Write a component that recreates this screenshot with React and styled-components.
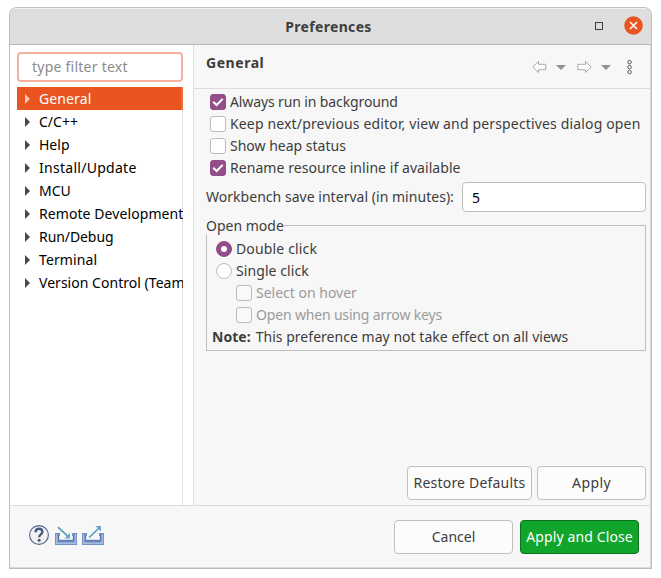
import React from "react";
import styled, { createGlobalStyle } from "styled-components";

const Global = createGlobalStyle`
  * { box-sizing: border-box; }
  body { margin: 0; background: #fff; }
`;

const Page = styled.div`
  width: 661px;
  height: 578px;
  padding: 7px 9px 9px 9px;
  background: #fff;
  font-family: "Noto Sans", "Open Sans", sans-serif;
  font-size: 14px;
  color: #3d3d3d;
  white-space: nowrap;
`;

const Window = styled.main`
  width: 643px;
  height: 562px;
  display: flex;
  flex-direction: column;
  overflow: hidden;
  border: 1px solid #bfbfbf;
  border-bottom-color: #bdbdbd;
  border-radius: 8px 8px 0 0;
  background: #f7f7f7;
  box-shadow: inset -1px -1px 0 #dadada;
`;

const TitleBar = styled.header`
  height: 37px;
  flex: none;
  display: grid;
  grid-template-columns: 1fr auto 1fr;
  align-items: center;
  padding: 0 8px 0 9px;
  background: #dedede;
  border-top: 1px solid #f2f2f2;
  border-bottom: 1px solid #b8b8b8;
`;

const WindowTitle = styled.h1`
  grid-column: 2;
  margin: 0 0 0 -5px;
  font-size: 14px;
  line-height: 20px;
  font-weight: 700;
  letter-spacing: 0.32px;
`;

const WindowControls = styled.div`
  display: flex;
  justify-content: flex-end;
  align-items: center;
  gap: 20px;
  margin-top: -2px;
`;

const Body = styled.div`
  display: flex;
  flex: 1;
  min-height: 0;
`;

const Sidebar = styled.nav`
  width: 184px;
  flex: none;
  display: flex;
  flex-direction: column;
  padding: 7px 0 0 7px;
  background: #fff;
  border-right: 1px solid #dfdfdf;
`;

const Filter = styled.input`
  width: 166px;
  height: 30px;
  flex: none;
  padding: 0 13px 2px;
  border: 2px solid #f4b19b;
  border-radius: 4px;
  outline: none;
  background: #fff;
  font: inherit;
  letter-spacing: 0.24px;
  &::placeholder { color: #8b8b8b; opacity: 1; }
`;

const Tree = styled.ul`
  width: 166px;
  flex: 1;
  margin: 5px 0 0;
  padding: 0;
  list-style: none;
  overflow: hidden;
  box-shadow: inset -1px 0 0 #dfdfdf;
`;

const TreeItem = styled.li`
  display: flex;
  align-items: center;
  gap: 9px;
  height: 23px;
  padding-left: 8px;
  line-height: 23px;
  letter-spacing: ${(p) => p.$track || 0}px;
  color: ${(p) => (p.$selected ? "#fff" : "#000")};
  background: ${(p) => (p.$selected ? "#e95420" : "transparent")};
  box-shadow: ${(p) => (p.$selected ? "inset -2px 0 0 #ed6d40" : "none")};
  &::before {
    content: "";
    flex: none;
    border-left: 5px solid ${(p) => (p.$selected ? "#f8c5b2" : "#484848")};
    border-top: 5px solid transparent;
    border-bottom: 5px solid transparent;
  }
`;

const Content = styled.section`
  flex: 1;
  display: flex;
  flex-direction: column;
  min-width: 0;
`;

const PageHeader = styled.div`
  height: 44px;
  flex: none;
  display: flex;
  justify-content: space-between;
  padding: 0 14px 0 12px;
  margin-right: 1px;
  border-bottom: 1px solid #dcdcdc;
`;

const PageTitle = styled.h2`
  margin: 8px 0 0;
  font-size: 14px;
  line-height: 20px;
  font-weight: 700;
  letter-spacing: 0.55px;
`;

const Toolbar = styled.div`
  padding-top: 14px;
  height: 32px;
`;

const Form = styled.div`
  flex: 1;
  display: flex;
  flex-direction: column;
  padding: 2px 5px 5px 12px;
`;

const Option = styled.label`
  display: flex;
  align-items: center;
  gap: 4px;
  height: 22px;
  line-height: 22px;
  margin-left: ${(p) => p.$indent || 0}px;
  letter-spacing: ${(p) => p.$track || 0}px;
  color: ${(p) => (p.$disabled ? "#9b9b9b" : "inherit")};
`;

const Mark = styled.span`
  width: 16px;
  height: 16px;
  flex: none;
  display: flex;
  align-items: center;
  justify-content: center;
  border: 1px solid ${(p) => (p.$on ? "#924d8b" : "#bcbcbc")};
  border-radius: ${(p) => (p.$round ? "50%" : "3px")};
  background: ${(p) => (p.$on ? "#924d8b" : p.$disabled ? "#f9f9f9" : "#fff")};
`;

const Dot = styled.span`
  width: 6px;
  height: 6px;
  border-radius: 50%;
  background: #fff;
`;

const Field = styled.label`
  display: flex;
  align-items: center;
  justify-content: space-between;
  margin-top: 3px;
  height: 30px;
  line-height: 28px;
  letter-spacing: 0.03px;
`;

const Interval = styled.input`
  width: 184px;
  height: 30px;
  padding: 0 9px;
  border: 1px solid #bfbfbf;
  border-radius: 4px;
  background: #fff;
  color: #000;
  font: inherit;
`;

const Group = styled.fieldset`
  min-width: 0;
  height: 134px;
  margin: 5px 0 0;
  padding: 4px 0 0 5px;
  border: 1px solid #bfbfbf;
`;

const Legend = styled.legend`
  margin-left: -6px;
  padding: 0;
  line-height: 17px;
  height: 17px;
  background: #f7f7f7;
`;

const Note = styled.p`
  display: flex;
  gap: 5px;
  margin: 0;
  line-height: 22px;
  letter-spacing: 0.03px;
`;

const Actions = styled.div`
  display: flex;
  justify-content: flex-end;
  gap: ${(p) => p.$gap}px;
  margin-top: auto;
`;

const Button = styled.button`
  width: ${(p) => p.$w}px;
  height: 34px;
  padding: 0 0 2px;
  border: 1px solid ${(p) => (p.$primary ? "#0b711b" : "#c0c0c0")};
  border-radius: 4px;
  background: ${(p) => (p.$primary ? "#12a52b" : "#fcfcfc")};
  color: ${(p) => (p.$primary ? "#fff" : "#3d3d3d")};
  font: inherit;
  letter-spacing: ${(p) => p.$track || 0}px;
`;

const Footer = styled.footer`
  height: 63px;
  flex: none;
  display: flex;
  justify-content: space-between;
  padding: 14px 11px 0 18px;
  margin-right: 1px;
  border-top: 1px solid #dcdcdc;
`;

const FooterIcons = styled.div`
  display: flex;
  padding-top: 4px;
  height: 26px;
  gap: 5px;
`;

const FooterActions = styled(Actions)`
  margin-top: 0;
`;

function Check({ on, disabled, children, indent, track }) {
  return (
    <Option $indent={indent} $track={track} $disabled={disabled}>
      <Mark $on={on} $disabled={disabled}>
        {on && (
          <svg width="14" height="14" viewBox="0 0 14 14" fill="none" stroke="#fff" strokeWidth="2">
            <path d="M2.2 6.7 5.6 10 11.7 3.9" />
          </svg>
        )}
      </Mark>
      {children}
    </Option>
  );
}

function Radio({ on, children, track }) {
  return (
    <Option $indent={4} $track={track}>
      <Mark $round $on={on}>{on && <Dot />}</Mark>
      {children}
    </Option>
  );
}

function NavigationIcons() {
  return (
    <svg width="104" height="18" viewBox="0 0 104 18" fill="none">
      <path d="M.8 8 6.5 2.4V5.3H13.7V10.7H6.5V13.6Z" stroke="#aaa" fill="#fdfdfd" strokeLinejoin="round" />
      <path d="M24 6H34L29 11Z" fill="#929292" />
      <path d="M59.2 8 53.5 2.4V5.3H45.8V10.7H53.5V13.6Z" stroke="#aaa" fill="#fdfdfd" strokeLinejoin="round" />
      <path d="M69 6H79L74 11Z" fill="#929292" />
      <g stroke="#555" fill="#fff">
        <circle cx="97.5" cy="3.2" r="1.75" />
        <circle cx="97.5" cy="8.1" r="1.75" />
        <circle cx="97.5" cy="13" r="1.75" />
      </g>
    </svg>
  );
}

function HelpIcon() {
  return (
    <svg width="22" height="22" viewBox="0 0 22 22" fill="none">
      <circle cx="11" cy="11" r="9.4" fill="#f1f1f1" stroke="#4d628b" strokeWidth="1.1" />
      <path d="M7.6 8.2C7.6 3.6 14.6 3.8 14.4 7.7C14.3 10.3 11.1 10.4 11.1 13.3" stroke="#44587f" strokeWidth="2.3" />
      <circle cx="11.1" cy="16.2" r="1.5" fill="#44587f" />
    </svg>
  );
}

function TrayIcon({ out }) {
  return (
    <svg width="22" height="22" viewBox="0 0 22 22" fill="none">
      <path d="M0 9H5V12H4.2V15.8H17.8V12H17V9H22V21H0Z" fill="#7190c3" />
      <path d="M1.6 10.5V19.2H20.4V10.5" stroke="#a9bfdf" strokeWidth="1.4" />
      <path d="M3.5 11V16.7H18.5V11" stroke="#5b79b0" />
      {out ? (
        <>
          <path d="M7.2 13.5 17 4" stroke="#579bc5" strokeWidth="1.7" />
          <path d="M13.5 2H19V7.5Z" fill="#6aa6cb" />
        </>
      ) : (
        <>
          <path d="M3 3.2 13 12.3" stroke="#579bc5" strokeWidth="1.7" />
          <path d="M15 9V14.5H9.5Z" fill="#6aa6cb" />
        </>
      )}
    </svg>
  );
}

const categories = [
  ["General", 0.12],
  ["C/C++", 0],
  ["Help", 0],
  ["Install/Update", 0.28],
  ["MCU", 0],
  ["Remote Development", 0.08],
  ["Run/Debug", -0.08],
  ["Terminal", 0.1],
  ["Version Control (Team)", 0.03],
];

export default function App() {
  return (
    <Page>
      <Global />
      <Window>
        <TitleBar>
          <WindowTitle>Preferences</WindowTitle>
          <WindowControls>
            <svg width="10" height="10" viewBox="0 0 10 10">
              <rect x="1.5" y="1.5" width="7" height="7" fill="none" stroke="#3d3d3d" />
            </svg>
            <svg width="19" height="19" viewBox="0 0 19 19">
              <circle cx="9.5" cy="9.5" r="9.3" fill="#e95420" />
              <path d="m6 6 7 7m0-7-7 7" stroke="#fff" strokeWidth="1.5" />
            </svg>
          </WindowControls>
        </TitleBar>
        <Body>
          <Sidebar>
            <Filter placeholder="type filter text" />
            <Tree>
              {categories.map(([name, track], i) => (
                <TreeItem key={name} $selected={i === 0} $track={track}>{name}</TreeItem>
              ))}
            </Tree>
          </Sidebar>
          <Content>
            <PageHeader>
              <PageTitle>General</PageTitle>
              <Toolbar><NavigationIcons /></Toolbar>
            </PageHeader>
            <Form>
              <Check on indent={4} track={-0.12}>Always run in background</Check>
              <Check indent={4} track={0.155}>Keep next/previous editor, view and perspectives dialog open</Check>
              <Check indent={4}>Show heap status</Check>
              <Check on indent={4} track={0.06}>Rename resource inline if available</Check>
              <Field>
                Workbench save interval (in minutes):
                <Interval defaultValue="5" />
              </Field>
              <Group>
                <Legend>Open mode</Legend>
                <Radio on track={0.15}>Double click</Radio>
                <Radio track={0.08}>Single click</Radio>
                <Check disabled indent={24}>Select on hover</Check>
                <Check disabled indent={24} track={-0.17}>Open when using arrow keys</Check>
                <Note><b>Note:</b><span>This preference may not take effect on all views</span></Note>
              </Group>
              <Actions $gap={5}>
                <Button $w={125} $track={0.2}>Restore Defaults</Button>
                <Button $w={109} $track={0.4}>Apply</Button>
              </Actions>
            </Form>
          </Content>
        </Body>
        <Footer>
          <FooterIcons>
            <HelpIcon />
            <TrayIcon />
            <TrayIcon out />
          </FooterIcons>
          <FooterActions $gap={7}>
            <Button $w={119}>Cancel</Button>
            <Button $w={119} $primary $track={0.12}>Apply and Close</Button>
          </FooterActions>
        </Footer>
      </Window>
    </Page>
  );
}
